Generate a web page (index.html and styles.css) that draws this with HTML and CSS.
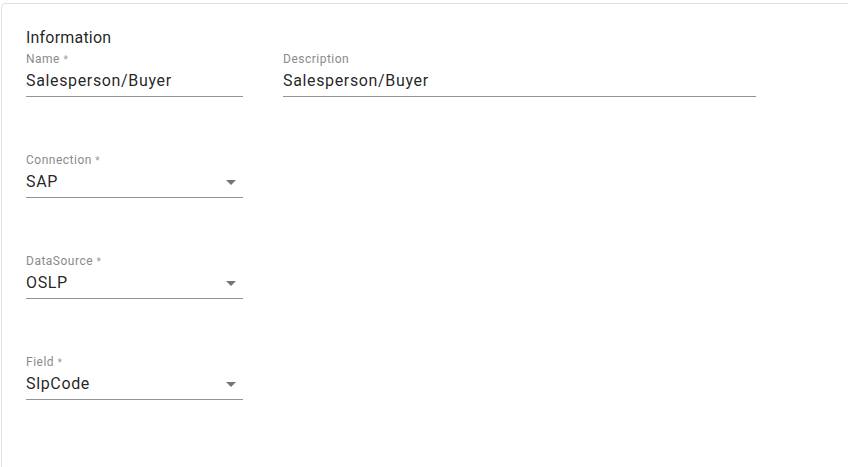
FILE: index.html
```html
<!DOCTYPE html>
<html lang="en">
<head>
<meta charset="utf-8">
<title>Information</title>
<link rel="stylesheet" href="styles.css">
</head>
<body>
<div class="card">
  <div class="title">Information</div>
  <div class="rows">
    <div class="row">
      <div class="field w-short">
        <label class="label">Name <span class="req">*</span></label>
        <div class="value">Salesperson/Buyer</div>
      </div>
      <div class="field w-long">
        <label class="label">Description</label>
        <div class="value">Salesperson/Buyer</div>
      </div>
    </div>
    <div class="row">
      <div class="field w-short select">
        <label class="label">Connection <span class="req">*</span></label>
        <div class="value">SAP<span class="arrow"></span></div>
      </div>
    </div>
    <div class="row">
      <div class="field w-short select">
        <label class="label">DataSource <span class="req">*</span></label>
        <div class="value">OSLP<span class="arrow"></span></div>
      </div>
    </div>
    <div class="row">
      <div class="field w-short select">
        <label class="label">Field <span class="req">*</span></label>
        <div class="value">SlpCode<span class="arrow"></span></div>
      </div>
    </div>
  </div>
</div>
</body>
</html>
```
FILE: styles.css
```css
html, body {
  margin: 0;
  padding: 0;
  background: #ffffff;
  overflow: hidden;
}
body {
  font-family: Roboto, "Liberation Sans", sans-serif;
  color: rgba(0, 0, 0, 0.87);
}
.card {
  margin: 3px -20px 0 1px;
  min-height: 480px;
  border: 1px solid #e0e0e0;
  border-radius: 4px;
  padding: 22px 24px 0 24px;
  box-sizing: border-box;
  background: #fff;
}
.title {
  font-size: 16px;
  line-height: 24px;
  height: 24px;
  letter-spacing: 0.2px;
}
.rows {
  display: flex;
  flex-direction: column;
  gap: 55px;
  margin-top: 1px;
}
.row {
  display: flex;
  gap: 40px;
}
.field {
  display: flex;
  flex-direction: column;
  border-bottom: 1px solid #949494;
  padding-bottom: 3px;
}
.w-short { width: 217px; }
.w-long { width: 473px; }
.label {
  display: block;
  height: 16px;
  font-size: 12px;
  line-height: 16px;
  color: #8a8a8a;
  letter-spacing: 0.5px;
}
.req {
  font-size: 10px;
  line-height: 0;
  color: #999999;
}
.value {
  margin-top: 2px;
  font-size: 16px;
  line-height: 24px;
  letter-spacing: 0.65px;
  display: flex;
  align-items: center;
  justify-content: space-between;
}
.arrow {
  width: 0;
  height: 0;
  border-left: 5px solid transparent;
  border-right: 5px solid transparent;
  border-top: 5px solid #757575;
  margin-right: 7px;
  margin-top: 1px;
}
```
